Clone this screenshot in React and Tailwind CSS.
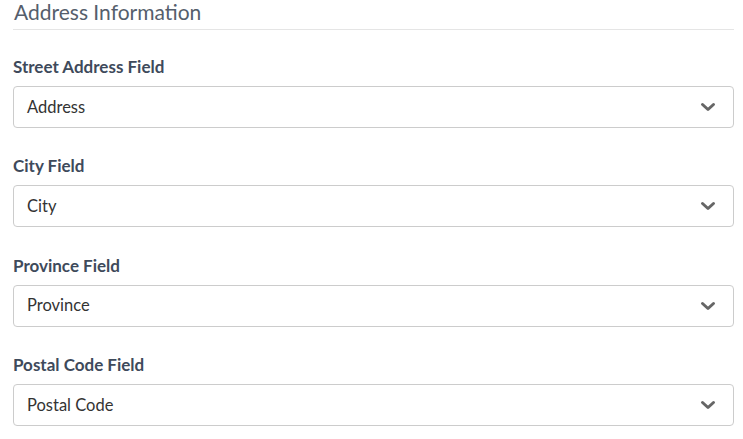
import React from 'react';

const fields = [
    { label: 'Street Address Field', placeholder: 'Address' },
    { label: 'City Field', placeholder: 'City' },
    { label: 'Province Field', placeholder: 'Province' },
    { label: 'Postal Code Field', placeholder: 'Postal Code' },
];

function Chevron() {
    return (
        <svg width="16" height="10" viewBox="0 0 16 10" className="shrink-0">
            <path d="M2.5 2.5 L8 7.5 L13.5 2.5" fill="none" stroke="#666666" strokeWidth="3" strokeLinecap="round" strokeLinejoin="round" />
        </svg>
    );
}

function SelectField({ label, placeholder }) {
    return (
        <div className="flex flex-col">
            <label className="text-[17px] font-bold text-[#3e4a5b] leading-[20px] h-[20px]">{label}</label>
            <div className="mt-[9px] h-[42px] flex items-center justify-between border border-[#cccccc] rounded-[4px] pl-[13px] pr-[17px] bg-white">
                <span className="text-[16.5px] text-[#333333]">{placeholder}</span>
                <Chevron />
            </div>
        </div>
    );
}

export default function App() {
    return (
        <div className="bg-white w-[743px] h-[439px] pl-[13px] pr-[9px]" style={{ fontFamily: '"Source Sans Pro", Lato, sans-serif' }}>
            <div className="h-[30px] border-b border-[#e5e5e5] pl-[1px]">
                <h2 className="text-[21px] leading-[24px] text-[#555e6c] font-normal">Address Information</h2>
            </div>
            <div className="mt-[27px] flex flex-col gap-[28.4px]">
                {fields.map((f) => (
                    <SelectField key={f.label} {...f} />
                ))}
            </div>
        </div>
    );
}
